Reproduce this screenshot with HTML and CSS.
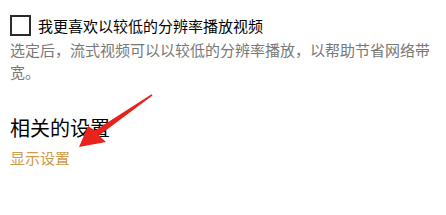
FILE: index.html
```html
<!DOCTYPE html>
<html lang="zh-CN">
<head>
    <meta charset="UTF-8">
    <title>视频播放设置</title>
    <link rel="stylesheet" href="styles.css">
</head>
<body>
    <div class="settings">
        <label class="option">
            <span class="box"></span>
            <span>我更喜欢以较低的分辨率播放视频</span>
        </label>
        <p class="desc">选定后，流式视频可以以较低的分辨率播放，以帮助节省网络带宽。</p>

        <h2>相关的设置</h2>
        <a class="link" href="#">显示设置</a>
    </div>

    <!-- red arrow pointing at the link -->
    <svg class="arrow" width="446" height="215" viewBox="0 0 446 215">
        <polygon fill="#e8231c" points="152.5,95.5 151.5,94.2 95,130.5 88,126 79,147 106,142 99,135.5"/>
    </svg>
</body>
</html>
```

FILE: styles.css
```css
body {
    margin: 0;
    background: #ffffff;
    font-family: "Noto Sans CJK SC", "Noto Sans", sans-serif;
    color: #000;
}
.settings {
    padding: 15px 10px 0 10px;
}
.option {
    display: flex;
    align-items: center;
    gap: 7px;
    height: 21px;
    font-size: 15px;
    line-height: 21px;
}
.box {
    width: 17px;
    height: 17px;
    border: 2px solid #2b2b2b;
}
.desc {
    margin: 3px 0 0 0;
    font-size: 15px;
    line-height: 22px;
    color: #777;
}
h2 {
    margin: 31px 0 0 0;
    font-size: 20px;
    font-weight: normal;
    line-height: 28px;
}
.link {
    display: block;
    margin-top: 5px;
    font-size: 15px;
    line-height: 22px;
    color: #cc9c4c;
    text-decoration: none;
}
.arrow {
    position: absolute;
    left: 0;
    top: 0;
}
```
